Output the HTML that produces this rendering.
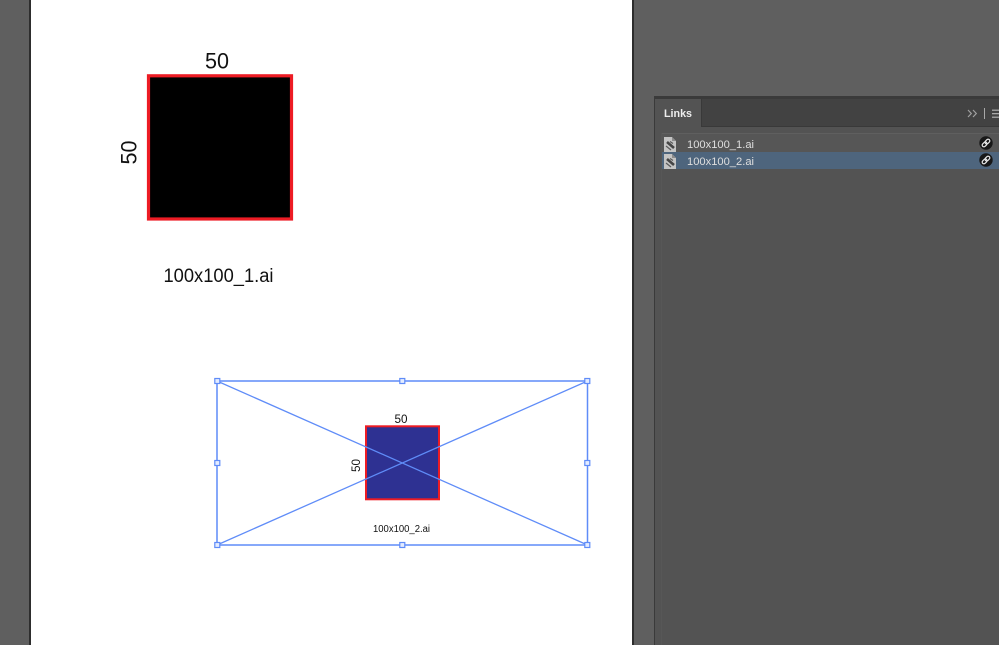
<!DOCTYPE html>
<html>
<head>
<meta charset="utf-8">
<style>
html,body{margin:0;padding:0;width:999px;height:645px;overflow:hidden;background:#5f5f5f}
svg{display:block;position:absolute;left:0;top:0}
text{font-family:"Liberation Sans",sans-serif}
</style>
</head>
<body>
<svg width="999" height="645" viewBox="0 0 999 645" xmlns="http://www.w3.org/2000/svg">
  <defs>
    <g id="doc">
      <path d="M0 0h8l4 4v11H0z" fill="#c4c4c4"/>
      <path d="M8 0v4h4z" fill="#8c8c8c"/>
      <path d="M3 5l7 6" stroke="#454545" stroke-width="2.600" fill="none"/>
      <path d="M2 9l5 4M6 4.500l3 2" stroke="#5a5a5a" stroke-width="1.200" fill="none"/>
    </g>
    <g id="link">
      <circle cx="0" cy="0" r="6.700" fill="#181818"/>
      <g transform="rotate(-45)" fill="none" stroke="#e8e8e8" stroke-width="1.200">
        <rect x="-4.700" y="-1.700" width="5.400" height="3.400" rx="1.700"/>
        <rect x="-0.700" y="-1.700" width="5.400" height="3.400" rx="1.700"/>
      </g>
    </g>
  </defs>
  <rect width="999" height="645" fill="#5f5f5f"/>
  <!-- page -->
  <rect x="29" y="0" width="2" height="645" fill="#2d2d2d"/>
  <rect x="31" y="0" width="601" height="645" fill="#ffffff"/>
  <rect x="632" y="0" width="2" height="645" fill="#2d2d2d"/>

  <!-- large artwork -->
  <rect x="148.500" y="75.800" width="143" height="143.200" fill="#000" stroke="#ed1c24" stroke-width="3.200"/>
  <text x="217" y="68.500" font-size="22" fill="#111" text-anchor="middle" textLength="24" lengthAdjust="spacingAndGlyphs">50</text>
  <text transform="translate(136.500,152.500) rotate(-90)" font-size="22" fill="#111" text-anchor="middle" textLength="24" lengthAdjust="spacingAndGlyphs">50</text>
  <text x="218.500" y="282" font-size="19" fill="#111" text-anchor="middle" textLength="110" lengthAdjust="spacingAndGlyphs">100x100_1.ai</text>

  <!-- small artwork -->
  <rect x="366" y="426.300" width="73" height="73" fill="#2e3192" stroke="#ed1c24" stroke-width="2"/>
  <text x="401" y="423" font-size="12" fill="#111" text-anchor="middle" textLength="13" lengthAdjust="spacingAndGlyphs">50</text>
  <text transform="translate(360,465.500) rotate(-90)" font-size="12" fill="#111" text-anchor="middle" textLength="13" lengthAdjust="spacingAndGlyphs">50</text>
  <text x="401.500" y="532" font-size="10" fill="#111" text-anchor="middle" textLength="57" lengthAdjust="spacingAndGlyphs">100x100_2.ai</text>

  <!-- selection frame -->
  <g fill="none" stroke="#5f8cf8">
    <rect x="217" y="381" width="370.500" height="164" stroke-width="1.500"/>
    <path d="M217 381L587.500 545M587.500 381L217 545" stroke-width="1.300"/>
  </g>
  <g fill="#e4ecff" stroke="#5f8cf8" stroke-width="1.200">
    <rect x="214.800" y="378.500" width="5" height="5"/>
    <rect x="399.800" y="378.500" width="5" height="5"/>
    <rect x="584.800" y="378.500" width="5" height="5"/>
    <rect x="214.800" y="460.500" width="5" height="5"/>
    <rect x="584.800" y="460.500" width="5" height="5"/>
    <rect x="214.800" y="542.500" width="5" height="5"/>
    <rect x="399.800" y="542.500" width="5" height="5"/>
    <rect x="584.800" y="542.500" width="5" height="5"/>
  </g>

  <!-- links panel -->
  <rect x="654" y="96" width="345" height="549" fill="#3a3a3a"/>
  <rect x="655" y="99" width="344" height="546" fill="#535353"/>
  <rect x="701" y="99" width="298" height="28" fill="#424242"/>
  <rect x="701" y="126" width="298" height="1" fill="#393939"/>
  <rect x="701" y="99" width="1" height="28" fill="#393939"/>
  <rect x="661" y="133" width="338" height="1" fill="#5f5f5f"/>
  <rect x="661" y="133" width="1" height="512" fill="#575757"/>
  <rect x="662" y="134" width="337" height="18" fill="#565656"/>
  <rect x="662" y="152" width="337" height="17" fill="#4e657d"/>
  <text x="664" y="117" font-size="11" font-weight="bold" fill="#eeeeee" textLength="28" lengthAdjust="spacingAndGlyphs">Links</text>
  <path d="M968 110l3.300 3.500-3.300 3.500M973 110l3.300 3.500-3.300 3.500" fill="none" stroke="#a0a0a0" stroke-width="1.200"/>
  <rect x="984" y="108" width="1" height="11" fill="#a8a8a8"/>
  <path d="M992 110.200h7M992 113.700h7M992 117.200h7" stroke="#b8b8b8" stroke-width="1.200"/>

  <!-- row 1 -->
  <use href="#doc" x="664" y="137"/>
  <text x="687" y="148" font-size="11" fill="#dedede" textLength="67" lengthAdjust="spacingAndGlyphs">100x100_1.ai</text>
  <use href="#link" x="986" y="143"/>

  <!-- row 2 -->
  <use href="#doc" x="664" y="154"/>
  <text x="687" y="165" font-size="11" fill="#dedede" textLength="67" lengthAdjust="spacingAndGlyphs">100x100_2.ai</text>
  <use href="#link" x="986" y="160"/>
</svg>
</body>
</html>
